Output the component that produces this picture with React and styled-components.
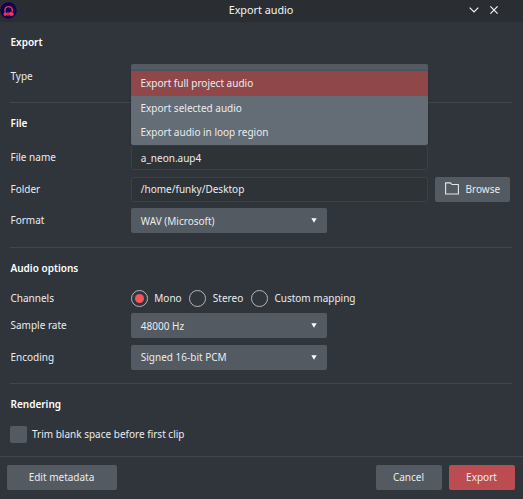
import React, { useState } from "react";
import styled, { createGlobalStyle, ThemeProvider } from "styled-components";

const theme = {
  colors: {
    titleBar: "#2a2e32",
    bg: "#30353b",
    text: "#eaecee",
    line: "#41464c",
    field: "#2e3338",
    fieldBorder: "#3b4046",
    button: "#535a62",
    popup: "#646c75",
    selected: "#904749",
    accent: "#bb4c50",
    radio: "#f55459",
  },
};

const exportTypes = [
  "Export full project audio",
  "Export selected audio",
  "Export audio in loop region",
];

const channelModes = ["Mono", "Stereo", "Custom mapping"];

const AppLogo = () => (
  <svg width="17" height="17" viewBox="0 0 17 17">
    <circle cx="8.5" cy="8.5" r="8.2" fill="#0d0350" />
    <path
      d="M5 9.8V8a3.6 3.4 0 0 1 7.2 0v1.8"
      fill="none"
      stroke="#f0355a"
      strokeWidth="1.4"
    />
    <path
      d="M3.2 12l1.8-2.3 1.6 1.3 1.4-1 1.2 1 1.6-1.4 1.4 1 .6-.4 1.2 1.9-1.2 1.9-.8-.6-1.2.9-1.6-1.3-1.2.9-1.4-.9-1.6 1.3z"
      fill="#f0355a"
    />
    <circle cx="8" cy="12" r=".6" fill="#0d0350" />
  </svg>
);

const FolderIcon = () => (
  <svg width="14" height="13" viewBox="0 0 14 13" fill="none">
    <path
      d="M.6 12V.9h4.9l1.4 1.6h6.5V12z"
      stroke="#e4e6e8"
      strokeWidth="1.1"
      strokeLinejoin="round"
    />
  </svg>
);

const Select = ({ value }) => (
  <SelectBox>
    <span>{value}</span>
    <svg width="6" height="5" viewBox="0 0 6 5">
      <path d="M.3.3h5.4L3 4.7z" fill="#fff" />
    </svg>
  </SelectBox>
);

const App = () => {
  const [type, setType] = useState(exportTypes[0]);
  const [channels, setChannels] = useState("Mono");

  return (
    <ThemeProvider theme={theme}>
      <GlobalStyle />
      <Dialog>
        <TitleBar>
          <AppLogo />
          <Title>Export audio</Title>
          <WindowButtons>
            <svg width="10" height="6" viewBox="0 0 10 6" fill="none">
              <path d="M.7.7L5 5 9.3.7" stroke="#f4f5f5" strokeWidth="1.2" />
            </svg>
            <svg width="8" height="8" viewBox="0 0 8 8" fill="none">
              <path d="M.4.4l7.2 7.2M7.6.4L.4 7.6" stroke="#f4f5f5" strokeWidth="1.2" />
            </svg>
          </WindowButtons>
        </TitleBar>

        <Section $height={81}>
          <Heading>Export</Heading>
          <Row>
            <Label>Type</Label>
            <Anchor>
              {/* the open list covers the value of the box */}
              <SelectBox $wide />
              <Popup>
                {exportTypes.map((item) => (
                  <Option key={item} $selected={item === type} onClick={() => setType(item)}>
                    {item}
                  </Option>
                ))}
              </Popup>
            </Anchor>
          </Row>
        </Section>

        <Section $height={145}>
          <Heading>File</Heading>
          <Row>
            <Label>File name</Label>
            <Field>a_neon.aup4</Field>
          </Row>
          <Row>
            <Label>Folder</Label>
            <Field>/home/funky/Desktop</Field>
            <BrowseButton>
              <FolderIcon />
              Browse
            </BrowseButton>
          </Row>
          <Row>
            <Label>Format</Label>
            <Select value="WAV (Microsoft)" />
          </Row>
        </Section>

        <Section $height={136}>
          <Heading $tight>Audio options</Heading>
          <Row $height={17}>
            <Label>Channels</Label>
            <RadioGroup>
              {channelModes.map((mode) => (
                <Radio key={mode} onClick={() => setChannels(mode)}>
                  <Circle>{mode === channels && <Dot />}</Circle>
                  {mode}
                </Radio>
              ))}
            </RadioGroup>
          </Row>
          <Row>
            <Label>Sample rate</Label>
            <Select value="48000 Hz" />
          </Row>
          <Row>
            <Label>Encoding</Label>
            <Select value="Signed 16-bit PCM" />
          </Row>
        </Section>

        <Section $height={72} $last>
          <Heading $tight>Rendering</Heading>
          <CheckRow>
            <Checkbox />
            Trim blank space before first clip
          </CheckRow>
        </Section>

        <Footer>
          <Button $width={110}>Edit metadata</Button>
          <Actions>
            <Button $width={66}>Cancel</Button>
            <Button $width={66} $accent>
              Export
            </Button>
          </Actions>
        </Footer>
      </Dialog>
    </ThemeProvider>
  );
};

const GlobalStyle = createGlobalStyle`
  * {
    box-sizing: border-box;
  }

  body {
    margin: 0;
    background: ${theme.colors.bg};
  }
`;

const Dialog = styled.div`
  display: flex;
  flex-direction: column;
  width: 523px;
  height: 499px;
  overflow: hidden;
  background: ${({ theme }) => theme.colors.bg};
  color: ${({ theme }) => theme.colors.text};
  font-family: "Noto Sans", sans-serif;
  font-size: 10px;
  line-height: 14px;
  white-space: nowrap;
`;

const TitleBar = styled.header`
  display: grid;
  grid-template-columns: 60px 1fr 60px;
  align-items: center;
  flex: none;
  height: 22px;
  padding: 0 1px 2px 0;
  background: ${({ theme }) => theme.colors.titleBar};
`;

const Title = styled.div`
  text-align: center;
  font-size: 10.8px;
  color: #f4f5f5;
`;

const WindowButtons = styled.div`
  display: flex;
  align-items: center;
  gap: 11px;
  padding-left: 7px;
`;

const Section = styled.section`
  display: flex;
  flex-direction: column;
  gap: 6.5px;
  flex: none;
  height: ${({ $height }) => $height}px;
  margin: 0 11px 0 10px;
  padding-top: 13px;
  border-bottom: ${({ $last, theme }) => ($last ? "none" : `1px solid ${theme.colors.line}`)};
`;

const Heading = styled.h2`
  margin: 0 0 ${({ $tight }) => ($tight ? 8 : 8.7)}px;
  padding-left: 0.5px;
  font-size: 10px;
  line-height: 14px;
  font-weight: 600;
  color: #fff;
`;

const Row = styled.div`
  display: flex;
  align-items: center;
  flex: none;
  height: ${({ $height }) => $height || 25}px;
`;

const Label = styled.span`
  flex: none;
  width: 120.8px;
  padding: 0 0 1px 0.5px;
`;

const Anchor = styled.div`
  position: relative;
`;

const SelectBox = styled.div`
  display: flex;
  align-items: center;
  justify-content: space-between;
  width: ${({ $wide }) => ($wide ? 297 : 196)}px;
  height: 25px;
  padding: 0 10px;
  border-radius: 2px;
  background: ${({ theme }) => theme.colors.button};
`;

const Popup = styled.div`
  position: absolute;
  top: 7px;
  left: 0;
  z-index: 1;
  width: 297px;
  border-radius: 2px;
  overflow: hidden;
  background: ${({ theme }) => theme.colors.popup};
  box-shadow: 0 0 2px rgba(0, 0, 0, 0.35);
`;

const Option = styled.div`
  display: flex;
  align-items: center;
  height: 24.5px;
  padding-left: 9.7px;
  background: ${({ $selected, theme }) => ($selected ? theme.colors.selected : "transparent")};
`;

const Field = styled.div`
  display: flex;
  align-items: center;
  width: 297px;
  height: 25px;
  padding-left: 9px;
  border: 1px solid ${({ theme }) => theme.colors.fieldBorder};
  border-radius: 2px;
  background: ${({ theme }) => theme.colors.field};
`;

const Button = styled.button`
  display: flex;
  align-items: center;
  justify-content: center;
  width: ${({ $width }) => $width}px;
  height: 25px;
  padding: 0 1px 1px 0;
  border: none;
  border-radius: 2px;
  background: ${({ $accent, theme }) => ($accent ? theme.colors.accent : theme.colors.button)};
  color: inherit;
  font: inherit;
`;

const BrowseButton = styled(Button)`
  width: 75px;
  margin-left: 7px;
  padding-right: 0;
  gap: 7px;
`;

const RadioGroup = styled.div`
  display: flex;
  gap: 7.7px;
`;

const Radio = styled.div`
  display: flex;
  align-items: center;
  gap: 6.5px;
`;

const Circle = styled.span`
  display: flex;
  align-items: center;
  justify-content: center;
  width: 17px;
  height: 17px;
  border: 1px solid #b4b7ba;
  border-radius: 50%;
`;

const Dot = styled.span`
  width: 9px;
  height: 9px;
  border-radius: 50%;
  background: ${({ theme }) => theme.colors.radio};
`;

const CheckRow = styled.div`
  display: flex;
  align-items: center;
  gap: 5px;
`;

const Checkbox = styled.span`
  width: 17px;
  height: 17px;
  border-radius: 2px;
  background: ${({ theme }) => theme.colors.button};
`;

const Footer = styled.footer`
  display: flex;
  align-items: flex-start;
  justify-content: space-between;
  flex: 1;
  padding: 8px 8px 0 7px;
  border-top: 1px solid ${({ theme }) => theme.colors.line};
`;

const Actions = styled.div`
  display: flex;
  gap: 7px;
`;

export default App;
